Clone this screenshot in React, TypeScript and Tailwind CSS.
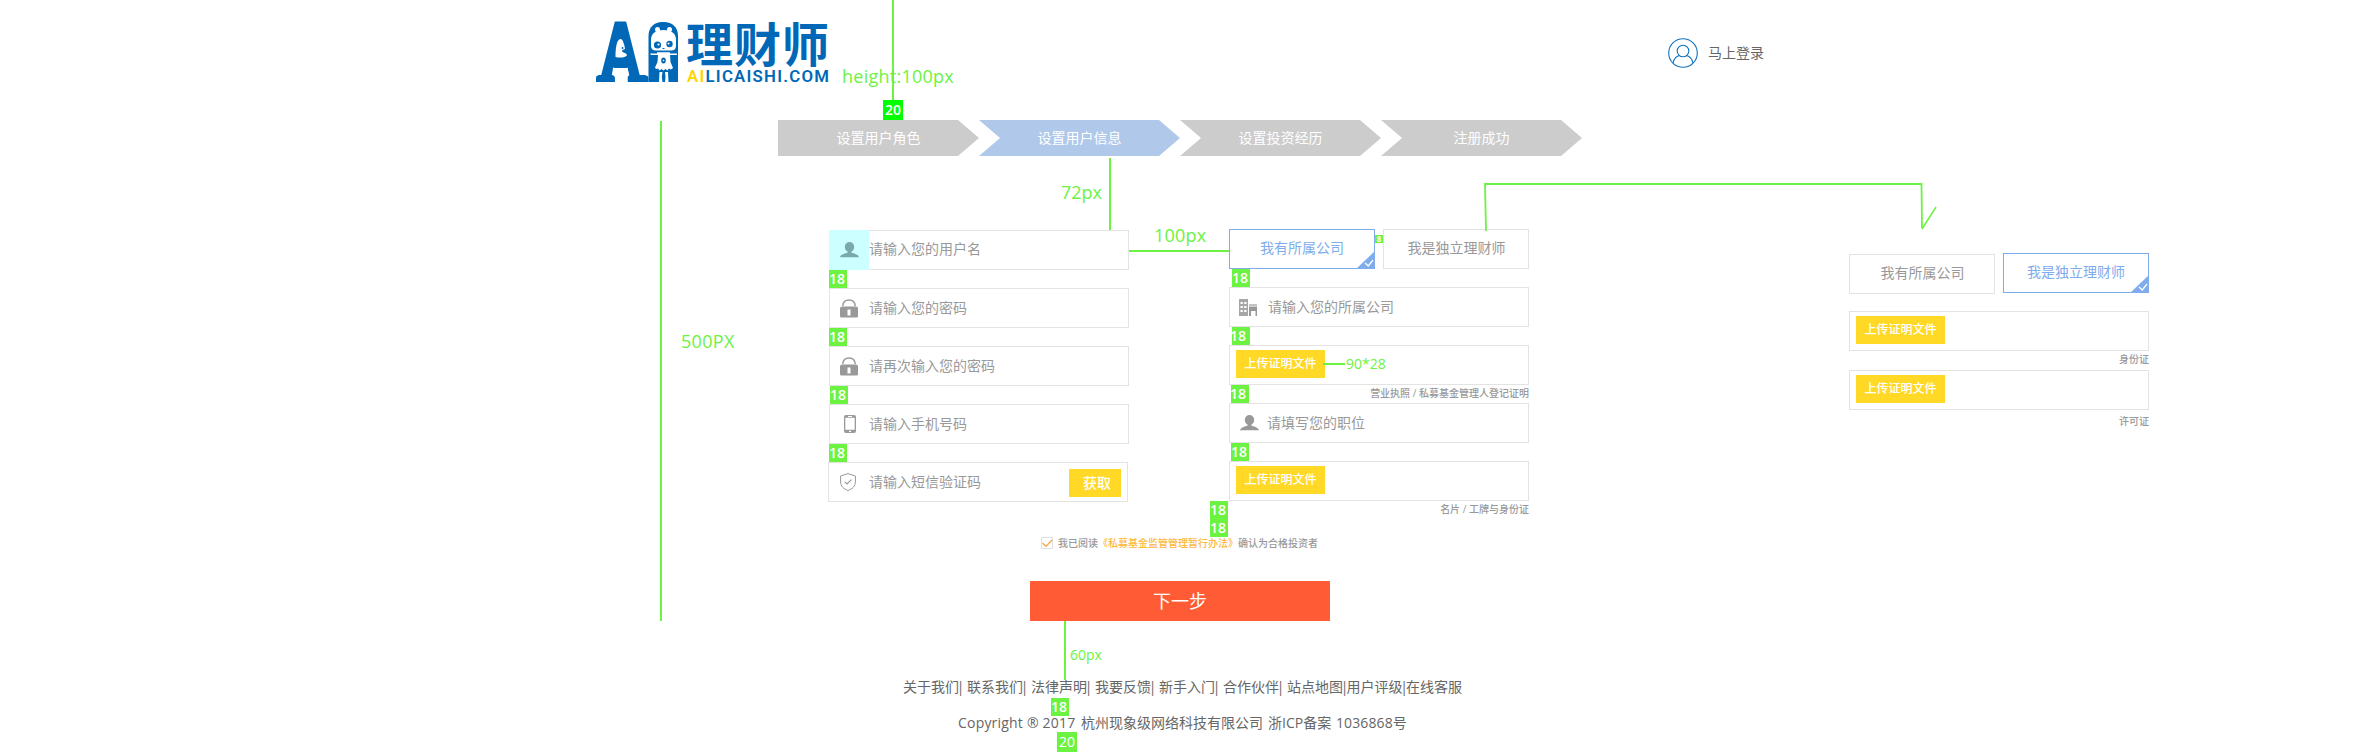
import type { ReactNode } from "react";

const steps = [
  { label: "设置用户角色", first: true },
  { label: "设置用户信息", active: true },
  { label: "设置投资经历" },
  { label: "注册成功" },
];

const links = ["关于我们", "联系我们", "法律声明", "我要反馈", "新手入门", "合作伙伴", "站点地图", "用户评级", "在线客服"];

function Logo() {
  return (
    <div className="flex">
      <svg width="84" height="60" viewBox="0 0 84 60" className="overflow-visible">
        <text
          x="3.500"
          y="59"
          fontFamily="Liberation Sans"
          fontWeight="700"
          fontSize="84"
          textLength="42"
          lengthAdjust="spacingAndGlyphs"
          fill="#0068b7"
          stroke="#0068b7"
          strokeWidth="3"
          strokeLinejoin="round"
        >
          A
        </text>
        <path d="M14 46 21 12h7l9 34z" fill="#0068b7" />
        <path d="M0 60v-4c0-2 1-2.500 3-3h13c2 .5 3 1 3 3v4zM31.500 60v-4c0-2 1-2.500 3-3h14c2.500.5 4 1 4 3v4z" fill="#0068b7" />
        <path d="M19.500 35c0-8 1-18 5-18 2.500 0 3 4 4 7l.5 3c-1.500 1-3 .5-3 2 1 2 4.500 1.500 5 4.500-3 2.500-8 2.500-11.500 1.500z" fill="#fff" />
        <circle cx="26.500" cy="26" r="1" fill="#0068b7" />
        <path d="M17 45.500c5 2 10 2 14.500 0l1 6c-1 .7-1 2-1 8.500H19c0-6 0-8-2.500-8.500z" fill="#fff" />
        <path d="M52.500 60V14C52.500 5 58.500 0 66 0h2c8 0 14 5 14 14v46z" fill="#0068b7" />
        <circle cx="61.500" cy="7.500" r="2.500" fill="#fff" />
        <circle cx="73.500" cy="7.500" r="2.500" fill="#fff" />
        <path d="M55 18c0-7 5-10 12.500-10S80 11 80 18v6c0 3-2 4.500-5 4.500H60c-3 0-5-1.500-5-4.500z" fill="#fff" />
        <circle cx="61.500" cy="23" r="3.600" fill="#0068b7" />
        <circle cx="73.500" cy="22" r="3.200" fill="#0068b7" />
        <circle cx="62.500" cy="22.500" r="1.100" fill="#fff" />
        <circle cx="72.500" cy="21.500" r="1" fill="#fff" />
        <path d="M66.500 26h2v1h-2z" fill="#0068b7" />
        <path d="M54 31.500h7v-1.300h13v1.300h7V33h-7l.5 7 2.500 6-2 1.500-2-1-1.500 2-2-1.500-2 1.500-2-1.500-2 1.500-1.500-2-2 .5-1-1.500 2.500-5.500.5-7h-7z" fill="#fff" />
        <ellipse cx="67.500" cy="38.500" rx="2.300" ry="3" fill="#0068b7" />
        <circle cx="67.500" cy="38.500" r=".8" fill="#fff" />
        <path d="M63.500 50h3l-.7 5 .7 5h-3.500zM69 50h3l.5 10H69l.5-5z" fill="#fff" />
      </svg>
      <svg width="150" height="60" viewBox="0 0 150 60" className="overflow-visible">
        <text x="6" y="40" fontFamily="Noto Sans CJK SC" fontWeight="700" fontSize="47" textLength="143" fill="#0068b7">
          理财师
        </text>
        <text x="7" y="60" fontFamily="Roboto" fontWeight="600" fontSize="16.800" textLength="142" fill="#0068b7">
          <tspan fill="#ffd400">AI</tspan>LICAISHI.COM
        </text>
      </svg>
    </div>
  );
}

function PersonIcon() {
  return (
    <svg width="19" height="16" viewBox="0 0 19 16" className="fill-current">
      <ellipse cx="9.500" cy="5" rx="4.700" ry="5" />
      <path d="M7.500 8.500h4v2.200c3.500.8 7 2 7.500 4.600H0c.5-2.600 4-3.800 7.500-4.600z" />
    </svg>
  );
}

function LockIcon() {
  return (
    <svg width="18" height="19" viewBox="0 0 18 19">
      <path d="M2.800 7C3 3.300 5.500 1 9 1s6 2.300 6.200 6" fill="none" stroke="#999" strokeWidth="1.500" />
      <path
        fillRule="evenodd"
        d="M2 7.500h14a2 2 0 0 1 2 2V17a1.500 1.500 0 0 1-1.500 1.500h-15A1.500 1.500 0 0 1 0 17V9.500a2 2 0 0 1 2-2zM7.500 10.500v6h3v-6z"
        fill="#999"
      />
    </svg>
  );
}

function PhoneIcon() {
  return (
    <svg width="12" height="18" viewBox="0 0 12 18">
      <path
        fillRule="evenodd"
        d="M2 0h8a2 2 0 0 1 2 2v14a2 2 0 0 1-2 2H2a2 2 0 0 1-2-2V2a2 2 0 0 1 2-2zM1.300 2.800v12h9.400v-12zM4 1v.9h4V1zM5 15.700v1.300h2v-1.300z"
        fill="#999"
      />
    </svg>
  );
}

function ShieldIcon() {
  return (
    <svg width="16" height="18" viewBox="0 0 16 18" fill="none" stroke="#999">
      <path d="M8 .6 15.400 3v6c0 4-3 7-7.400 8.400C3.600 16 .6 13 .6 9V3z" />
      <path d="m4.800 8.800 2.200 2.200 4.400-4.400" strokeWidth="1.200" />
    </svg>
  );
}

function BuildingIcon() {
  return (
    <svg width="18" height="17" viewBox="0 0 18 17">
      <path
        fillRule="evenodd"
        d="M0 0h9v17H0zM1.500 3v2h2.300V3zM5.200 3v2h2.300V3zM1.500 7v2h2.300V7zM5.200 7v2h2.300V7zM1.500 11v2h2.300v-2zM5.200 11v2h2.300v-2z"
        fill="#a6a6a6"
      />
      <path d="M10 5h8v2h-8z" fill="#c4c4c4" />
      <path d="M10 7.500h8V17h-1.500v-5h-4.500v5h-2z" fill="#999" />
    </svg>
  );
}

function Field({ icon, text, pad = "pl-[10px]", children }: { icon?: ReactNode; text?: string; pad?: string; children?: ReactNode }) {
  return (
    <div className="flex h-10 w-[300px] shrink-0 border border-[#e3e3e3]">
      {icon && <div className={`flex w-[39px] shrink-0 items-center ${pad}`}>{icon}</div>}
      {text && <span className="leading-[38px]">{text}</span>}
      {children}
    </div>
  );
}

function UploadField() {
  return (
    <Field>
      <button className="mt-1 ml-1.5 h-7 w-[89px] bg-[#ffd926] text-xs leading-7 font-medium text-white">上传证明文件</button>
    </Field>
  );
}

function Hint({ children }: { children?: ReactNode }) {
  return <div className="h-[18px] text-right text-[10px] leading-[17px] font-medium whitespace-pre">{children}</div>;
}

function Choice({ label, selected }: { label: string; selected?: boolean }) {
  return selected ? (
    <div className="relative h-10 w-[146px] border border-[#7eacec] text-center leading-[36px] text-[#7eacec]">
      {label}
      <svg width="19" height="18" viewBox="0 0 19 18" className="absolute -right-px -bottom-px">
        <path d="M19 0v18H0z" fill="#7eacec" />
        <path d="m9 12 3.300 3L17 9" fill="none" stroke="#fff" strokeWidth="1.300" />
      </svg>
    </div>
  ) : (
    <div className="h-10 w-[146px] border border-[#e3e3e3] pl-px text-center leading-[35px]">{label}</div>
  );
}

function Badge({ at, children = "18" }: { at: string; children?: ReactNode }) {
  return <span className={`absolute h-[18px] w-[18px] bg-[#6cf241] text-[14px] leading-[17px] font-semibold text-white ${at}`}>{children}</span>;
}

function Note({ at, children }: { at: string; children: ReactNode }) {
  return <span className={`absolute whitespace-nowrap text-[#6cf241] ${at}`}>{children}</span>;
}

function Annotations() {
  return (
    <div className="pointer-events-none absolute inset-0">
      <svg width="2360" height="752" className="absolute inset-0" fill="none" stroke="#6cf241" strokeWidth="2">
        <path d="M893 0V100M661 121V621M1110 158V230M1129 251H1229M1323 364H1345M1065 621V680" />
        <path d="M1486 231 1485 184H1921.500L1922 228" strokeWidth="1.800" />
        <path d="M1922 229 1936 207" strokeWidth="1.500" />
      </svg>
      <Note at="left-[842px] top-[64px] text-[18px] leading-6 tracking-[0.25px]">height:100px</Note>
      <Note at="left-[1061px] top-[180px] text-[18px] leading-6">72px</Note>
      <Note at="left-[1154px] top-[223px] text-[18px] leading-6 tracking-[0.2px]">100px</Note>
      <Note at="left-[681px] top-[329px] text-[18px] leading-6 tracking-[0.3px]">500PX</Note>
      <Note at="left-[1346px] top-[354px] text-sm leading-5">90*28</Note>
      <Note at="left-[1070px] top-[645px] text-sm leading-5">60px</Note>
      <span className="absolute top-[100px] left-[883px] h-5 w-5 bg-[#00ff00] text-center text-[14px] leading-5 font-semibold text-white">20</span>
      <Badge at="left-[829px] top-[270px]" />
      <Badge at="left-[829px] top-[328px]" />
      <Badge at="left-[830px] top-[386px]" />
      <Badge at="left-[829px] top-[444px]" />
      <Badge at="left-[1232px] top-[269px]" />
      <Badge at="left-[1232px] top-[327px] -indent-[2px]" />
      <Badge at="left-[1231px] top-[385px] -indent-px" />
      <Badge at="left-[1231px] top-[443px]" />
      <Badge at="left-[1210px] top-[501px]" />
      <Badge at="left-[1210px] top-[519px]" />
      <Badge at="left-[1051px] top-[698px]" />
      <span className="absolute top-[732px] left-[1057px] h-5 w-5 bg-[#6cf241] text-center text-[14px] leading-5 font-medium text-white">20</span>
      <span className="absolute top-[235px] left-[1375px] h-2 w-2 bg-[#6cf241] text-center text-[8px] leading-2 font-bold text-white">8</span>
    </div>
  );
}

export default function App() {
  return (
    <div className="relative h-[752px] w-[2360px] overflow-hidden bg-white font-['Open_Sans','Noto_Sans_CJK_SC',sans-serif] text-sm text-[#999]">
      <header className="flex h-[100px] pt-[22px] pl-[596px]">
        <Logo />
        <div className="ml-[838px] flex h-[30px] w-[120px] items-center gap-[10px] pt-[31px] text-[#666]">
          <svg width="30" height="30" viewBox="0 0 30 30" fill="none" stroke="#0f72bf" strokeWidth="1.100" className="shrink-0">
            <circle cx="15" cy="15" r="14.300" />
            <circle cx="15" cy="13" r="5.800" />
            <path d="M5 25c1-5 4-7 7-7.500M25 25c-1-5-4-7-7-7.500" />
          </svg>
          <span className="whitespace-nowrap">马上登录</span>
        </div>
      </header>

      <nav className="mt-5 ml-[778px] flex h-9 w-[804px] text-white">
        {steps.map((s) => (
          <div
            key={s.label}
            className={`w-[201px] text-center leading-9 ${s.active ? "bg-[#b0c9eb]" : "bg-[#ccc]"} ${
              s.first
                ? "[clip-path:polygon(0_0,180px_0,201px_50%,180px_100%,0_100%)]"
                : "[clip-path:polygon(0_0,180px_0,201px_50%,180px_100%,0_100%,21px_50%)]"
            }`}
          >
            {s.label}
          </div>
        ))}
      </nav>

      <main className="mt-[73px] flex h-[290px] items-start pl-[829px]">
        <form className="flex w-[300px] flex-col gap-[18px] pt-px">
          <div className="flex h-10 w-[300px] border border-[#e3e3e3]">
            <div className="-my-px -ml-px flex w-10 items-center bg-[#ccffff] pl-[11px] text-[#7aa9a9]">
              <PersonIcon />
            </div>
            <span className="leading-[36px]">请输入您的用户名</span>
          </div>
          <Field icon={<LockIcon />} text="请输入您的密码" />
          <Field icon={<LockIcon />} text="请再次输入您的密码" />
          <Field icon={<PhoneIcon />} text="请输入手机号码" pad="pl-[14px]" />
          <div className="-ml-px">
            <Field icon={<ShieldIcon />} text="请输入短信验证码" pad="pl-[11px] mr-px">
              <button className="mt-1.5 mr-1.5 ml-auto h-7 w-[52px] bg-[#ffd926] pl-1 leading-7 font-medium text-white">获取</button>
            </Field>
          </div>
        </form>

        <form className="ml-[100px] w-[300px]">
          <div className="flex justify-between">
            <Choice label="我有所属公司" selected />
            <Choice label="我是独立理财师" />
          </div>
          <Hint />
          <Field icon={<BuildingIcon />} text="请输入您的所属公司" pad="pl-[9px] mr-[-1px]" />
          <Hint />
          <UploadField />
          <Hint>营业执照 / 私募基金管理人登记证明</Hint>
          <Field icon={<PersonIcon />} text="请填写您的职位" pad="pl-[10px] mr-[-2px]" />
          <Hint />
          <UploadField />
          <Hint>名片 / 工牌与身份证</Hint>
        </form>

        <form className="ml-[320px] w-[300px] pt-6">
          <div className="flex justify-between">
            <div className="pt-px">
              <Choice label="我有所属公司" />
            </div>
            <Choice label="我是独立理财师" selected />
          </div>
          <div className="mt-[17px]">
            <UploadField />
          </div>
          <Hint>身份证</Hint>
          <div className="mt-px">
            <UploadField />
          </div>
          <div className="mt-[3px]">
            <Hint>许可证</Hint>
          </div>
        </form>
      </main>

      <label className="mt-[18px] ml-[1041px] flex h-3 items-center gap-[5px] text-[10px] leading-3 font-medium">
        <svg width="12" height="12" viewBox="0 0 12 12" fill="none">
          <path d="M.5.5h11v11H.5z" stroke="#e0e0e0" />
          <path d="m1.500 6 3.500 3.500 6-6.500" stroke="#fba33a" strokeWidth="1.200" />
        </svg>
        <span className="whitespace-nowrap">
          我已阅读<span className="text-[#fdb83f]">《私募基金监管管理暂行办法》</span>确认为合格投资者
        </span>
      </label>

      <button className="mt-8 ml-[1030px] block h-10 w-[300px] bg-[#ff5c36] text-[18px] leading-10 text-white">下一步</button>

      <footer className="mt-14 text-[#666]">
        <div className="ml-[903px] flex h-5 w-[570px] leading-5">
          {links.map((l, i) => (
            <span key={l} className={`flex shrink-0 ${i < 7 ? "w-16 last:w-auto" : "w-[59.5px]"} ${i === 6 ? "-mr-[4.500px]" : ""}`}>
              {l}
              {i < 8 && <span className="flex w-[3px] justify-center">|</span>}
            </span>
          ))}
        </div>
        <p className="mt-4 ml-[958px] flex h-5 leading-5 whitespace-nowrap">
          <span className="w-[123px] tracking-[0.2px]">Copyright ® 2017</span>
          <span className="w-[187px]">杭州现象级网络科技有限公司</span>
          <span className="w-[68px]">浙ICP备案</span>
          <span className="tracking-[0.1px]">1036868号</span>
        </p>
      </footer>

      <Annotations />
    </div>
  );
}
